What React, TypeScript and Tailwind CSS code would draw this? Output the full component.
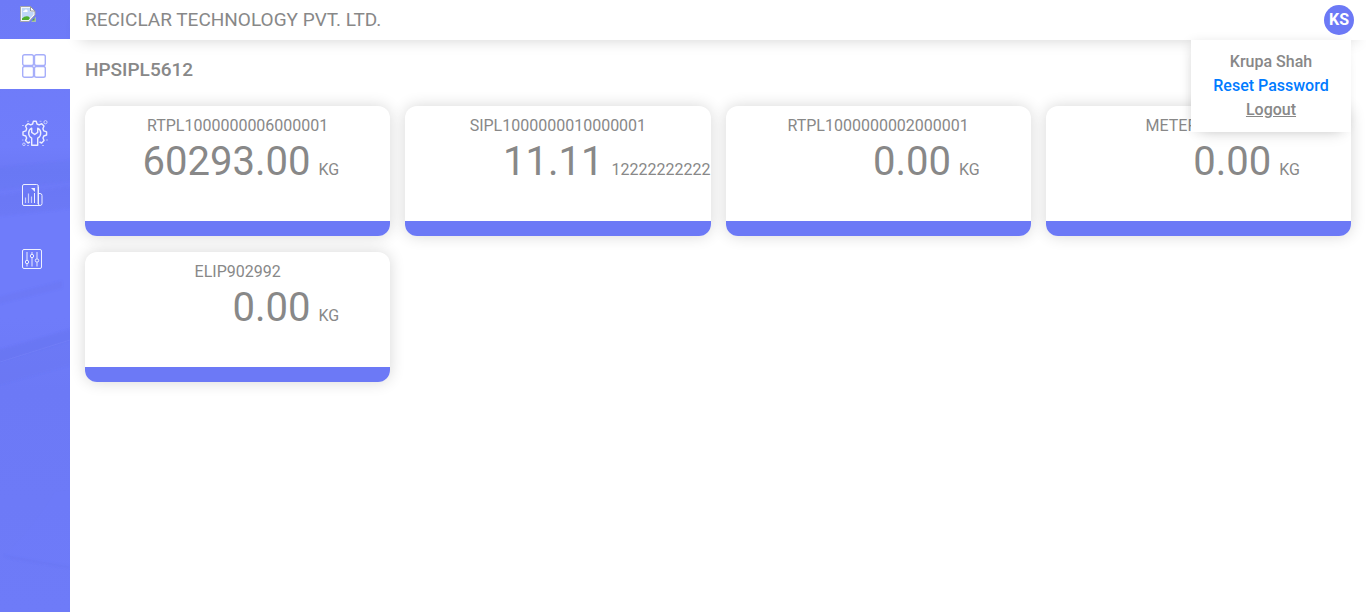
import React from "react";

const meters = [
  { id: "RTPL1000000006000001", value: "60293.00", unit: "KG" },
  { id: "SIPL1000000010000001", value: "11.11", unit: "12222222222" },
  { id: "RTPL1000000002000001", value: "0.00", unit: "KG" },
  { id: "METER100001", value: "0.00", unit: "KG" },
  { id: "ELIP902992", value: "0.00", unit: "KG" },
];

function BrokenImage() {
  return (
    <svg width="16" height="16" viewBox="0 0 16 16">
      <path d="M0.500 0.500H10.500L15 5V9L9 15.500H0.500Z" fill="#f4f7fc" stroke="#a3a4a8" />
      <path d="M2 2H10V6H13.500V8.500L8.500 14H2Z" fill="#bfd6fa" />
      <path d="M3 6Q3 4.500 4.500 4.500 5 3 6.500 3.500 8 3.500 7.500 6Z" fill="#fff" />
      <path d="M2 14V12.500Q5 9.500 8.500 10.500L10 12 8.500 14Z" fill="#4fae30" />
      <path d="M10.500 0.500V5H15Z" fill="#fff" stroke="#8f9196" strokeWidth="0.900" />
      <path d="M11 16 16 10.500V16Z" fill="#a8bcae" />
      <path d="M12 14.500 14.500 12V14.500Z" fill="#4fae30" />
    </svg>
  );
}

function DashboardIcon() {
  return (
    <svg width="24" height="24" viewBox="0 0 24 24" fill="none" stroke="#a6aefa" strokeWidth="1.400">
      <rect x="0.700" y="0.700" width="10.800" height="10.800" rx="1.800" />
      <rect x="12.500" y="0.700" width="10.800" height="10.800" rx="1.800" />
      <rect x="0.700" y="12.500" width="10.800" height="10.800" rx="1.800" />
      <rect x="12.500" y="12.500" width="10.800" height="10.800" rx="1.800" />
    </svg>
  );
}

function MaintenanceIcon() {
  return (
    <svg width="26" height="27" viewBox="0 0 26 27" fill="none" stroke="#eceeff" strokeWidth="1.400" strokeLinejoin="round">
      <path d="M8 22 6 23 3.500 20.600 4.600 18.100 3.800 16 1 15.100V11.900L3.800 10.900 4.700 8.700 3.500 6 6 3.700 8.600 4.900 10.600 4 11.400 1.200H14.200L15 4 17.200 4.900 19.700 3.700 22 6.100 20.900 8.700 21.800 10.900 24.600 11.900V15L21.800 16 21 18.100 22 20.600 19.700 23 17.500 22" />
      <path d="M9.700 25.300V18.200C5.600 16 5.700 10.200 9.700 8.200V12.400L12.700 14.500 15.700 12.400V8.200C19.700 10.200 19.800 16 15.700 18.200V25.300Z" />
      <circle cx="23.500" cy="2.200" r="1.600" strokeWidth="0.900" opacity="0.8" />
      <circle cx="1.900" cy="24.300" r="1.300" strokeWidth="0.900" opacity="0.8" />
      <path d="M5 1.300h2M0 5.500h2M17.500 1.300h2M24 20h2M5 25.500h2M20 25.500h2M0 20h1.500" strokeWidth="0.800" opacity="0.7" />
    </svg>
  );
}

function ReportIcon() {
  return (
    <svg width="21" height="22" viewBox="0 0 21 22" fill="none" stroke="#eef0ff">
      <path d="M18 21.500H2Q0.500 21.500 0.500 20V2Q0.500 0.500 2 0.500H14.500Q16.500 0.500 16.500 2.500V20Q16.500 21.500 18 21.500Q20 21.500 20 19.500V11.500Q20 9.500 18 9.500H16.500" />
      <path d="M3.500 19V13.500M6.500 19V9.500M9.500 19V12.500" strokeWidth="1.200" opacity="0.7" />
      <path d="M12.500 19V9" />
      <path d="M9 4H13V8Z" fill="#eef0ff" stroke="none" />
      <path d="M15.500 2V20" opacity="0.45" />
    </svg>
  );
}

function SettingsIcon() {
  return (
    <svg width="20" height="20" viewBox="0 0 20 20" fill="none" stroke="#eef0ff">
      <rect x="0.500" y="0.500" width="19" height="19" rx="1.500" />
      <path d="M5 3V11M5 15V17.500M10 3V5M10 9V17.500M15 3V9.500M15 13.500V17.500" strokeWidth="1.500" opacity="0.65" />
      <circle cx="5" cy="13" r="1.700" />
      <circle cx="10" cy="7" r="1.700" />
      <circle cx="15" cy="11.500" r="1.700" />
    </svg>
  );
}

function SidebarTexture() {
  return (
    <svg className="absolute inset-0 -z-10" width="70" height="612" viewBox="0 0 70 612" aria-hidden="true">
      <defs>
        <linearGradient id="haze" x1="0" y1="0" x2="0" y2="1">
          <stop offset="0" stopColor="#6d7af7" />
          <stop offset="0.240" stopColor="#707dfb" />
          <stop offset="0.280" stopColor="#6c79f6" />
          <stop offset="0.350" stopColor="#6f7cfa" />
          <stop offset="0.520" stopColor="#6f7cfa" />
          <stop offset="0.640" stopColor="#6c79f6" />
          <stop offset="1" stopColor="#6e7bf8" />
        </linearGradient>
        <filter id="soften" x="-10%" y="-10%" width="120%" height="120%">
          <feGaussianBlur stdDeviation="1" />
        </filter>
      </defs>
      <rect width="70" height="612" fill="url(#haze)" />
      <g fill="#5c68e5" filter="url(#soften)">
        <path d="M-5 168 75 160V180L-5 190Z" opacity="0.12" />
        <path d="M-5 196 75 186V208L-5 217Z" opacity="0.14" />
        <path d="M-5 298 62 281V288L-5 305Z" opacity="0.16" />
        <path d="M-5 351 75 328V340L-5 364Z" opacity="0.22" />
        <path d="M-5 364 75 340V364L-5 386Z" opacity="0.1" />
        <path d="M3 555 75 567V569L12 559Z" opacity="0.14" />
      </g>
      <path d="M0 362 70 340" stroke="#7c88fb" opacity="0.4" />
      <path d="M55 492 70 490V567L5 555C25 535 38 520 55 492Z" fill="#7582ff" opacity="0.15" />
    </svg>
  );
}

function Sidebar() {
  return (
    <aside className="relative isolate flex w-[70px] shrink-0 flex-col bg-[#6e7bf8]">
      <SidebarTexture />
      <div className="h-[39px] pt-[6px] pl-5">
        <BrokenImage />
      </div>
      <a className="flex h-[50px] items-center bg-white pt-[3px] pl-[22px]">
        <DashboardIcon />
      </a>
      <a className="mt-[31px] pl-[22px]">
        <MaintenanceIcon />
      </a>
      <a className="mt-[37px] pl-[22px]">
        <ReportIcon />
      </a>
      <a className="mt-[43px] pl-[22px]">
        <SettingsIcon />
      </a>
    </aside>
  );
}

function MeterCard({ id, value, unit }: { id: string; value: string; unit: string }) {
  return (
    <article className="flex h-[130px] min-w-0 flex-col overflow-hidden rounded-xl bg-white pt-2 shadow-[0_0_15px_rgba(0,0,0,0.16)]">
      <h2 className="text-center text-base leading-6">{id}</h2>
      <div className="flex items-baseline">
        <span className="w-[225.500px] text-right text-[40px] leading-[48px]">{value}</span>
        <span className="ml-2 shrink-0 text-base leading-6">{unit}</span>
      </div>
      <div className="mt-auto h-[15px] bg-[#6c79f6]" />
    </article>
  );
}

export default function App() {
  return (
    <div className="flex h-[612px] overflow-hidden bg-white font-['Roboto',sans-serif] text-[#888]">
      <Sidebar />
      <div className="flex min-w-0 grow flex-col">
        <header className="relative z-10 flex h-10 items-center justify-between bg-white pr-3 pl-[15px] shadow-[0_10px_15px_-10px_rgba(0,0,0,0.18)]">
          <h1 className="text-[19px] leading-7">RECICLAR TECHNOLOGY PVT. LTD.</h1>
          <div className="flex size-[30px] items-center justify-center rounded-full bg-[#6c79f6] text-base font-bold text-white">
            KS
          </div>
          <div className="absolute top-full right-[15px] flex h-[92px] w-40 flex-col items-center bg-white pt-[10px] text-base leading-6 font-medium shadow-[0_10px_15px_-10px_rgba(0,0,0,0.16),-3px_0_12px_-4px_rgba(0,0,0,0.16)]">
            <span>Krupa Shah</span>
            <a className="text-[#007bff]">Reset Password</a>
            <a className="underline">Logout</a>
          </div>
        </header>
        <main className="px-[15px] pt-4">
          <h2 className="text-[19px] leading-[27px] font-medium">HPSIPL5612</h2>
          <section className="mt-[23px] grid grid-cols-4 gap-x-[15px] gap-y-4">
            {meters.map((meter) => (
              <MeterCard key={meter.id} {...meter} />
            ))}
          </section>
        </main>
      </div>
    </div>
  );
}
